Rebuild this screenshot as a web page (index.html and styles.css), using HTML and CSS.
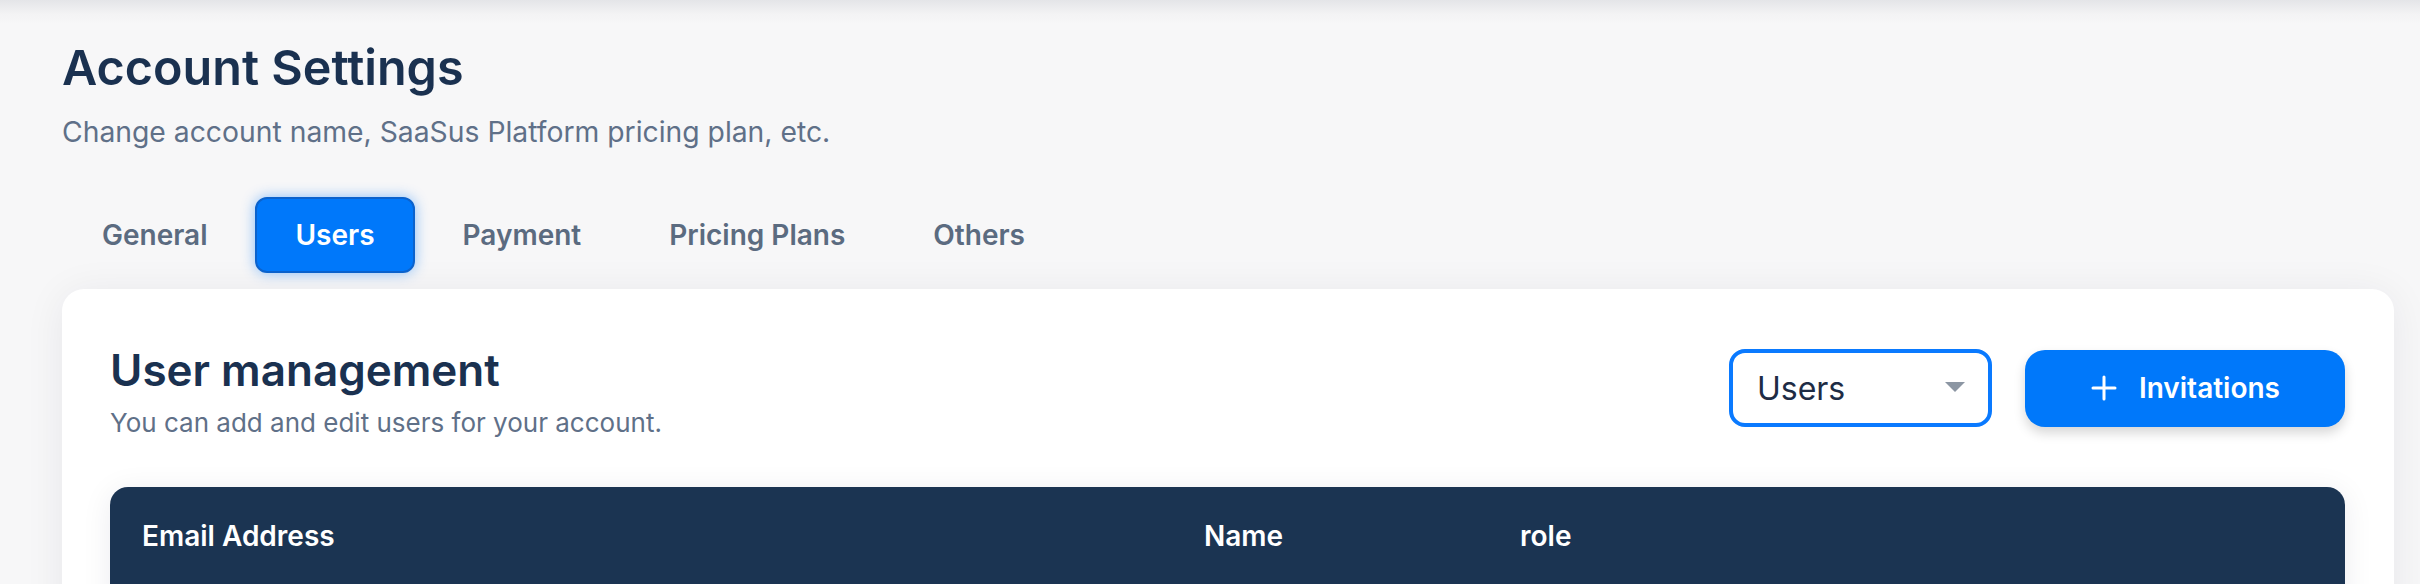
FILE: index.html
```html
<!DOCTYPE html>
<html lang="en">
<head>
<meta charset="utf-8">
<title>Account Settings</title>
<link rel="stylesheet" href="styles.css">
</head>
<body>
<div class="page">
  <header class="page-header">
    <h1 class="page-title">Account Settings</h1>
    <p class="page-subtitle">Change account name, SaaSus Platform pricing plan, etc.</p>
  </header>

  <nav class="tabs">
    <a class="tab">General</a>
    <a class="tab tab-active">Users</a>
    <a class="tab">Payment</a>
    <a class="tab">Pricing Plans</a>
    <a class="tab">Others</a>
  </nav>

  <section class="card">
    <div class="card-head">
      <div class="card-titles">
        <h2 class="card-title">User management</h2>
        <p class="card-subtitle">You can add and edit users for your account.</p>
      </div>
      <div class="card-actions">
        <div class="select">
          <span class="select-value">Users</span>
          <span class="select-caret"></span>
        </div>
        <button class="btn-primary">
          <svg class="btn-icon" viewBox="0 0 28 28" aria-hidden="true"><path d="M14 3v22M3 14h22" stroke="currentColor" stroke-width="3" stroke-linecap="round" fill="none"/></svg>
          <span>Invitations</span>
        </button>
      </div>
    </div>

    <div class="table">
      <div class="table-head">
        <div class="th">Email Address</div>
        <div class="th">Name</div>
        <div class="th">role</div>
      </div>
      <div class="table-body">
        <div class="td">&nbsp;</div>
        <div class="td">&nbsp;</div>
        <div class="td">&nbsp;</div>
      </div>
    </div>
  </section>
</div>
</body>
</html>
```

FILE: styles.css
```css
html, body {
  margin: 0;
  padding: 0;
  height: 100%;
  overflow: hidden;
}

body {
  font-family: Inter, "Noto Sans", sans-serif;
  background: #f7f7f8;
  color: #1a3150;
}

.page {
  min-height: 100%;
  padding: 36px 26px 0 62px;
  box-sizing: border-box;
  background: linear-gradient(#e4e5e8 0, #f3f3f4 14px, #f7f7f8 24px);
}

.page-title {
  margin: 0;
  font-size: 48.5px;
  line-height: 64px;
  font-weight: 600;
  color: #1a3150;
}

.page-subtitle {
  margin: 12px 0 0;
  font-size: 28.3px;
  line-height: 40px;
  font-weight: 400;
  color: #5f7088;
}

.tabs {
  display: flex;
  gap: 8px;
  margin-top: 45px;
}

.tab {
  display: flex;
  align-items: center;
  height: 76px;
  padding: 0 38px;
  border: 2px solid transparent;
  border-radius: 12px;
  box-sizing: border-box;
  font-size: 28px;
  font-weight: 600;
  color: #5b6b80;
  cursor: pointer;
}

.tab-active {
  background: #0078fa;
  border-color: #0b62cc;
  color: #ffffff;
  box-shadow: 0 0 14px rgba(0, 120, 250, 0.45);
}

.card {
  margin-top: 16px;
  background: #ffffff;
  border-radius: 22px;
  padding: 48px 49px 48px 48px;
  box-shadow: 0 4px 40px rgba(20, 30, 60, 0.07);
}

.card-head {
  display: flex;
  justify-content: space-between;
  align-items: flex-start;
}

.card-titles {
  padding-top: 5px;
}

.card-title {
  margin: 0;
  font-size: 44px;
  line-height: 56px;
  font-weight: 600;
  color: #1a3150;
}

.card-subtitle {
  margin: 5px 0 0;
  font-size: 26px;
  line-height: 40px;
  color: #5f7088;
}

.card-actions {
  display: flex;
  align-items: center;
  gap: 33px;
  margin-top: 12px;
}

.select {
  display: flex;
  align-items: center;
  justify-content: space-between;
  width: 263px;
  height: 78px;
  box-sizing: border-box;
  padding: 0 23px 0 24px;
  border: 4px solid #0a7aff;
  border-radius: 16px;
  background: #ffffff;
}

.select-value {
  font-size: 32px;
  color: #1e2c45;
}

.select-caret {
  width: 0;
  height: 0;
  border-left: 10px solid transparent;
  border-right: 10px solid transparent;
  border-top: 10px solid #8c96a3;
  margin-top: -2px;
}

.btn-primary {
  display: flex;
  align-items: center;
  gap: 21px;
  height: 77px;
  padding: 0 65px 0 65px;
  border: none;
  border-radius: 20px;
  background: #0078fa;
  color: #ffffff;
  font-family: inherit;
  font-size: 28px;
  font-weight: 600;
  box-shadow: 0 6px 12px rgba(0, 0, 0, 0.16);
  cursor: pointer;
}

.btn-icon {
  width: 28px;
  height: 28px;
}

.table {
  margin-top: 44px;
  border-radius: 18px;
  overflow: hidden;
  box-shadow: 0 4px 30px rgba(20, 30, 60, 0.08);
}

.table-head,
.table-body {
  display: grid;
  grid-template-columns: 1062px 316px 1fr;
}

.table-head {
  background: #1b3452;
}

.th {
  padding: 32px;
  font-size: 28px;
  line-height: 35px;
  font-weight: 600;
  color: #ffffff;
}

.td {
  padding: 32px;
  font-size: 28px;
  line-height: 35px;
}
```
